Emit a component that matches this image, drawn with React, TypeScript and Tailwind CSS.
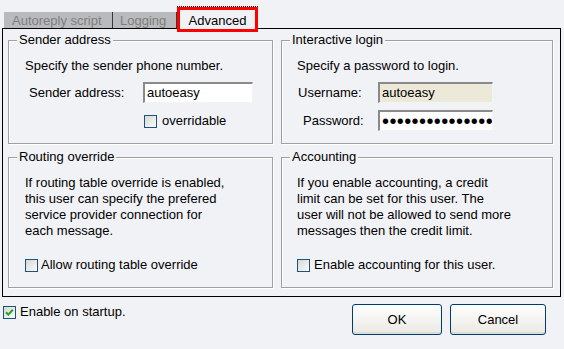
import React from "react";

const BG = "bg-[#f1f2f6]";

function Check({ checked = false }: { checked?: boolean }) {
  return (
    <span className="relative inline-block w-[13px] h-[13px] shrink-0 border border-[#1c5180] bg-gradient-to-br from-[#d8d8d2] to-[#fbfbf9]">
      {checked && (
        <svg viewBox="0 0 11 11" className="absolute left-0 top-0 w-[11px] h-[11px]">
          <path d="M2 5.2 L4.3 7.6 L8.8 2.8" fill="none" stroke="#21a121" strokeWidth="2" />
        </svg>
      )}
    </span>
  );
}

function Group({
  title,
  children,
  className = "",
}: {
  title: string;
  children: React.ReactNode;
  className?: string;
}) {
  return (
    <div
      className={`relative border border-[#a0a0a0] shadow-[inset_1px_1px_0_#fff,1px_1px_0_#fff] ${className}`}
    >
      <span className={`absolute left-[8px] top-[-9px] px-[2px] leading-[16px] ${BG}`}>{title}</span>
      {children}
    </div>
  );
}

function Field({ value, beige = false, w = 110 }: { value: React.ReactNode; beige?: boolean; w?: number }) {
  return (
    <div
      className={`flex items-center h-[21px] pl-[2px] overflow-hidden border-t-2 border-l-2 border-t-[#8a8a8a] border-l-[#8a8a8a] border-b border-r border-b-[#f4f4f4] border-r-[#f4f4f4] ${
        beige ? "bg-[#ece9d8]" : "bg-white"
      } ${w === 110 ? "w-[110px]" : "w-[115px]"}`}
    >
      {value}
    </div>
  );
}

export default function App() {
  return (
    <div
      className={`w-[564px] h-[349px] overflow-hidden ${BG} text-black text-[13px] leading-[16px] font-['Liberation_Sans',Arial,sans-serif]`}
    >
      {/* Tabs */}
      <div className="flex items-end h-[28px] pl-[4px]">
        <div className="w-[109px] h-[16px] bg-[#b9babd] border-r border-[#3a3a3a] text-[#7e7e7e] pl-[8px] pt-[1px] leading-[16px]">
          Autoreply script
        </div>
        <div className="w-[64px] h-[16px] bg-[#b9babd] border-r border-[#3a3a3a] text-[#7e7e7e] pl-[7px] pt-[1px] leading-[16px]">
          Logging
        </div>
        <div className="relative z-10 mb-[-4px] border-t border-dotted border-black">
          <div className={`w-[81px] h-[25px] border-[3px] border-[#ff0000] ${BG} flex items-center justify-center pt-[2px]`}>
            Advanced
          </div>
        </div>
      </div>

      {/* Panel */}
      <div className="ml-[2px] w-[559px] h-[269px] border border-black pt-[11px] pl-[5px] pr-[6px]">
        <div className="grid grid-cols-[265px_272px] gap-x-[8px] gap-y-[13px] grid-rows-[104px_131px]">
          <Group title="Sender address" className="pt-[17px] pl-[16px]">
            <div>Specify the sender phone number.</div>
            <div className="flex items-center mt-[8px]">
              <span className="ml-[4px] w-[114px]">Sender address:</span>
              <Field value="autoeasy" />
            </div>
            <div className="flex items-center mt-[10px] ml-[119px] gap-[5px]">
              <Check />
              <span>overridable</span>
            </div>
          </Group>

          <Group title="Interactive login" className="pt-[17px] pl-[15px]">
            <div>Specify a password to login.</div>
            <div className="flex items-center mt-[8px]">
              <span className="ml-[1px] w-[80px]">Username:</span>
              <Field value="autoeasy" beige w={115} />
            </div>
            <div className="flex items-center mt-[7px]">
              <span className="ml-[6px] w-[75px]">Password:</span>
              <Field
                w={115}
                value={
                  <span className="text-[20px] leading-none tracking-[0.4px] font-['Liberation_Sans',Arial,sans-serif]">
                    •••••••••••••••
                  </span>
                }
              />
            </div>
          </Group>

          <Group title="Routing override" className="pt-[17px] pl-[16px]">
            <div>
              If routing table override is enabled,
              <br />
              this user can specify the prefered
              <br />
              service provider connection for
              <br />
              each message.
            </div>
            <div className="flex items-center mt-[18px] gap-[3px]">
              <Check />
              <span>Allow routing table override</span>
            </div>
          </Group>

          <Group title="Accounting" className="pt-[17px] pl-[15px]">
            <div>
              If you enable accounting, a credit
              <br />
              limit can be set for this user. The
              <br />
              user will not be allowed to send more
              <br />
              messages then the credit limit.
            </div>
            <div className="flex items-center mt-[18px] gap-[4px]">
              <Check />
              <span>Enable accounting for this user.</span>
            </div>
          </Group>
        </div>
      </div>

      {/* Bottom */}
      <div className="flex items-start justify-between pt-[7px] pl-[3px] pr-[18px]">
        <div className="flex items-center gap-[4px]">
          <Check checked />
          <span>Enable on startup.</span>
        </div>
        <div className="flex gap-[8px]">
          <button className="w-[90px] h-[31px] rounded-[3px] border border-[#003c74] bg-gradient-to-b from-[#fefefe] to-[#eae9e3] shadow-[inset_0_-2px_0_#dcdbd4]">
            OK
          </button>
          <button className="w-[96px] h-[31px] rounded-[3px] border border-[#003c74] bg-gradient-to-b from-[#fefefe] to-[#eae9e3] shadow-[inset_0_-2px_0_#dcdbd4]">
            Cancel
          </button>
        </div>
      </div>
    </div>
  );
}
